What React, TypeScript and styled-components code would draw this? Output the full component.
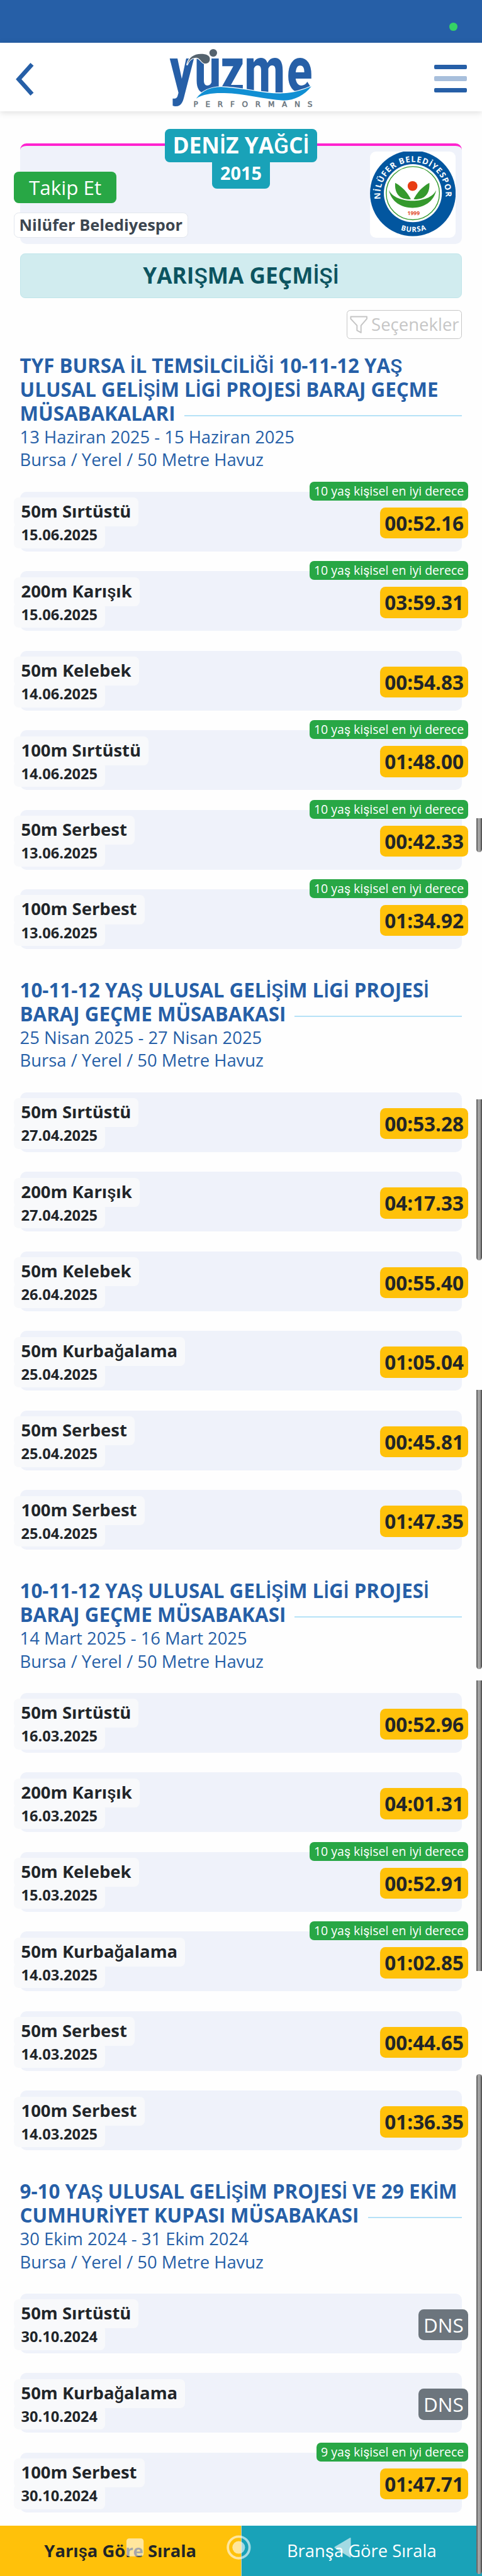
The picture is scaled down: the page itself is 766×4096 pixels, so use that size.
import React from 'react';
import styled, { createGlobalStyle, css } from 'styled-components';

const SCALE = 0.70895;
const u = (n: number) => `${Math.round(n * SCALE * 100) / 100}px`;

const color = {
  brand: '#265fa7',
  teal: '#19a2b8',
  green: '#28a745',
  amber: '#ffc10a',
  grey: '#6c757d',
  panel: '#eff2fa',
  chip: '#f8f9fb',
  ink: '#212529',
};

const GlobalStyle = createGlobalStyle`
  *, *::before, *::after { box-sizing: border-box; }
  html, body { margin: 0; padding: 0; background: #fefefe; overflow: hidden; }
  body { font-family: "Open Sans", "Noto Sans", sans-serif; color: ${color.ink}; }
`;

const Page = styled.div`
  position: relative;
  width: 100%;
  height: 4096px;
  overflow: hidden;
  display: flex;
  flex-direction: column;
`;

/* Letters of the extended Latin block come from the fallback face. */
const FallbackGlyph = styled.span<{ $bold?: boolean }>`
  font-family: Roboto, sans-serif;
  font-weight: ${(p) => (p.$bold ? 500 : 400)};
  line-height: 0;
`;

function T({ children, bold }: { children: string; bold?: boolean }) {
  return (
    <>
      {children.split(/([İŞşĞğ]+)/).map((part, i) =>
        i % 2 ? (
          <FallbackGlyph key={i} $bold={bold}>
            {part}
          </FallbackGlyph>
        ) : (
          part
        ),
      )}
    </>
  );
}

/* ---------- top ---------- */

const StatusBar = styled.div`
  flex: none;
  height: ${u(95.5)};
  background: ${color.brand};
  display: flex;
  justify-content: flex-end;
  align-items: flex-start;
  padding: ${u(51)} ${u(55)} 0 0;
`;

const StatusDot = styled.span`
  width: ${u(18)};
  height: ${u(18)};
  border-radius: 50%;
  background: #35d366;
`;

const Header = styled.header`
  flex: none;
  height: ${u(154.5)};
  background: #fff;
  box-shadow: 0 2px 10px rgba(0, 0, 0, 0.13);
  display: flex;
  align-items: flex-start;
  justify-content: space-between;
  padding: 0 ${u(34)} 0 ${u(34)};
`;

const BackIcon = styled.svg`
  width: ${u(44)};
  height: ${u(76)};
  margin-top: ${u(43.5)};
`;

const Brand = styled.svg`
  overflow: visible;
  width: ${u(360)};
  height: ${u(170)};
  margin: ${u(-5.5)} 0 0 ${u(29)};
`;

const Burger = styled.div`
  width: ${u(73)};
  margin-top: ${u(49.5)};
  display: flex;
  flex-direction: column;
  gap: ${u(15.5)};
`;

const BurgerBar = styled.span<{ $faded?: boolean }>`
  height: ${u(10.7)};
  border-radius: 2px;
  background: ${(p) => (p.$faded ? '#a8bfdc' : color.brand)};
`;

const letterScaleX = 0.736;
const letterX = [62, 229, 402, 564, 850].map((x) => x / letterScaleX).join(' ');

function BrandLogo() {
  return (
    <Brand viewBox="0 0 1080 510">
      <text
        transform={`scale(${letterScaleX} 1)`}
        x={letterX}
        y="350"
        fontFamily="Roboto, sans-serif"
        fontWeight="800"
        fontSize="432"
        fill={color.brand}
      >
        yuzme
      </text>
      <path
        d="M240 392C290 330 350 312 420 315C560 322 700 362 830 357C900 352 960 335 1015 310C970 370 900 405 830 405C700 400 560 358 430 356C350 354 290 362 240 392Z"
        fill="#118fd3"
        stroke="#fff"
        strokeWidth="10"
        paintOrder="stroke"
      />
      <path
        d="M178 168C190 110 230 88 285 92C320 95 335 110 332 130C330 152 312 160 292 155C270 145 265 116 235 118C210 118 190 135 178 168Z"
        fill="#55636e"
        stroke="#fff"
        strokeWidth="10"
        paintOrder="stroke"
      />
      <circle cx="355" cy="85" r="26" fill="#55636e" />
      <text
        x="222"
        y="449"
        fontFamily="'DejaVu Sans', sans-serif"
        fontSize="51"
        fontWeight="400"
        stroke="#66717a"
        strokeWidth="2"
        fill="#66717a"
        textLength="800"
        lengthAdjust="spacing"
      >
        PERFORMANS
      </text>
    </Brand>
  );
}

/* ---------- profile ---------- */

const Content = styled.main`
  flex: 1;
  padding: ${u(72)} ${u(44.6)} 0;
  display: flex;
  flex-direction: column;
`;

const ProfileCard = styled.section`
  position: relative;
  flex: none;
  height: ${u(225)};
  border-top: 4px solid #ff22cf;
  border-radius: ${u(14)};
  background: ${color.panel};
  display: flex;
  justify-content: space-between;
  padding: ${u(12.4)} ${u(14)} 0 0;
`;

const NameStack = styled.div`
  position: absolute;
  top: ${u(-38.6)};
  left: 0;
  right: 0;
  display: flex;
  flex-direction: column;
  align-items: center;
  color: #fff;
  font-weight: 700;
`;

const NameBadge = styled.div`
  width: ${u(341)};
  height: ${u(75)};
  border-radius: ${u(11)};
  background: ${color.teal};
  font-size: ${u(49.8)};
  line-height: ${u(72.7)};
  text-align: center;
  white-space: nowrap;
`;

const YearBadge = styled.div`
  width: ${u(130)};
  height: ${u(59)};
  border-radius: 0 0 ${u(11)} ${u(11)};
  background: ${color.teal};
  font-size: ${u(40.6)};
  line-height: ${u(47.5)};
  text-align: center;
`;

const ProfileLeft = styled.div`
  margin-left: ${u(-14)};
  padding-top: ${u(45)};
  display: flex;
  flex-direction: column;
  align-items: flex-start;
  gap: ${u(21.5)};
`;

const FollowButton = styled.button`
  width: ${u(231)};
  height: ${u(70)};
  border: 0;
  padding: 0;
  border-radius: ${u(11)};
  background: ${color.green};
  color: #fff;
  font: 400 ${u(44.3)} / ${u(69.5)} 'Open Sans', sans-serif;
`;

const ClubChip = styled.div`
  height: ${u(56.5)};
  width: ${u(391)};
  border: 1.5px solid #e3e7ee;
  border-radius: ${u(11)};
  background: #fff;
  color: #3c4650;
  font-weight: 700;
  font-size: ${u(35.8)};
  line-height: ${u(51)};
  text-align: center;
  white-space: nowrap;
`;

const ClubLogo = styled.svg`
  flex: none;
  width: ${u(192.5)};
  height: ${u(193)};
  border-radius: ${u(13)};
  background: #fff;
`;

function ClubEmblem() {
  const lettering = {
    fontFamily: '"Open Sans", sans-serif',
    fontWeight: 700,
    fill: '#fff',
  };
  return (
    <ClubLogo viewBox="92 90 577 579">
      <defs>
        <path id="arcTop" d="M163 410A220 220 0 1 1 599 410" />
        <path id="arcBottom" d="M133 450A259 259 0 0 0 627 450" />
      </defs>
      <circle cx="380" cy="371" r="288" fill="#02569f" />
      <circle cx="380" cy="370" r="195" fill="#fff" />
      <circle cx="380" cy="370" r="179" fill="none" stroke="#35992d" strokeWidth="6" />
      <circle cx="378" cy="322" r="33" fill="#e83d14" />
      <path d="M261 300C313 328 343 366 367 411C295 414 256 378 261 300Z" fill="#35992d" />
      <path d="M491 300C439 328 409 366 385 411C457 414 496 378 491 300Z" fill="#35992d" />
      <path d="M219 349C262 445 495 445 537 349C508 508 248 508 219 349Z" fill="#35992d" />
      <text
        x="385"
        y="516"
        textAnchor="middle"
        fontFamily="'Open Sans', sans-serif"
        fontWeight="700"
        fontSize="36"
        fill="#e0492a"
      >
        1999
      </text>
      <text {...lettering} fontSize="55">
        <textPath href="#arcTop" textLength="735" lengthAdjust="spacing">
          NİLÜFER BELEDİYESPOR
        </textPath>
      </text>
      <text {...lettering} fontSize="48" textAnchor="middle" letterSpacing="4">
        <textPath href="#arcBottom" startOffset="51%">
          BURSA
        </textPath>
      </text>
    </ClubLogo>
  );
}

const PageTitle = styled.h1`
  flex: none;
  margin: ${u(22)} 0 0;
  height: ${u(100)};
  border: 1.5px solid #bfe5ea;
  border-radius: ${u(11)};
  background: #d1ecef;
  color: #0c5460;
  font-size: ${u(49.7)};
  line-height: ${u(95)};
  font-weight: 700;
  text-align: center;
`;

const OptionsButton = styled.button`
  flex: none;
  align-self: flex-end;
  margin-top: ${u(26)};
  width: ${u(259)};
  height: ${u(66)};
  padding: 0 0 0 ${u(6)};
  border: 1.5px solid #c6c6c6;
  border-radius: ${u(8)};
  background: #fff;
  color: #c6c6c6;
  display: flex;
  align-items: center;
  gap: ${u(8)};
  font: 400 ${u(38.8)} / ${u(62)} 'Open Sans', sans-serif;
  white-space: nowrap;
`;

const FilterIcon = styled.svg`
  flex: none;
  width: ${u(40)};
  height: ${u(40)};
`;

/* ---------- meets ---------- */

const Meet = styled.section`
  flex: none;
  & + & {
    margin-top: ${u(64.6)};
  }
`;

const MeetHead = styled.div`
  color: ${color.brand};
  margin-bottom: ${u(46)};
`;

const MeetTitle = styled.h2`
  margin: 0;
  font-size: ${u(44.1)};
  line-height: ${u(54.6)};
  font-weight: 700;
`;

const TitleLine = styled.span`
  display: flex;
  height: ${u(53.3)};
  white-space: pre;
`;

const TitleRule = styled.i`
  flex: 1;
  height: 2px;
  margin: ${u(30.8)} 0 0 ${u(20)};
  background: #b6e2f7;
`;

const MeetInfo = styled.p`
  margin: 0;
  height: ${u(52)};
  font-size: ${u(38.65)};
  line-height: ${u(53.4)};
`;

const Races = styled.ul`
  list-style: none;
  margin: 0;
  padding: 0;
  display: flex;
  flex-direction: column;
  gap: ${u(44.4)};
`;

const Race = styled.li`
  position: relative;
  height: ${u(134)};
  border-radius: ${u(14)};
  background: ${color.panel};
  display: flex;
  justify-content: space-between;
  align-items: flex-start;
`;

const RaceLeft = styled.div`
  margin: ${u(13)} 0 0 ${u(-14)};
  display: flex;
  flex-direction: column;
  align-items: flex-start;
  font-weight: 700;
  white-space: nowrap;
`;

const chip = css`
  background: ${color.chip};
  border-radius: ${u(11)};
  padding: 0 ${u(17)} 0 ${u(16.6)};
`;

const Stroke = styled.span`
  ${chip}
  height: ${u(65)};
  font-size: ${u(38.7)};
  line-height: ${u(61.6)};
`;

const RaceDate = styled.span`
  ${chip}
  margin-top: ${u(-8)};
  padding-top: ${u(8)};
  height: ${u(56.6)};
  font-size: ${u(33.3)};
  line-height: ${u(38.4)};
`;

const Result = styled.span<{ $absent: boolean }>`
  margin: ${u(35)} ${u(-14)} 0 0;
  height: ${u(69.7)};
  width: ${(p) => u(p.$absent ? 111.5 : 198)};
  border-radius: ${u(12)};
  text-align: center;
  font-size: ${u(44.4)};
  line-height: ${u(69.7)};
  font-weight: ${(p) => (p.$absent ? 400 : 700)};
  color: ${(p) => (p.$absent ? '#fff' : color.ink)};
  background: ${(p) => (p.$absent ? color.grey : color.amber)};
`;

const BestBadge = styled.span`
  position: absolute;
  top: ${u(-23)};
  right: ${u(-14)};
  height: ${u(42.5)};
  padding: 0 ${u(10)};
  border-radius: ${u(10)};
  background: ${color.green};
  color: #fff;
  font-size: ${u(27.5)};
  line-height: ${u(41)};
  white-space: nowrap;
`;

type RaceData = { stroke: string; date: string; result: string; best?: string };
type MeetData = { title: string[]; dates: string; races: RaceData[] };

const TEN = '10 yaş kişisel en iyi derece';
const NINE = '9 yaş kişisel en iyi derece';

const meets: MeetData[] = [
  {
    title: ['TYF BURSA İL TEMSİLCİLİĞİ 10-11-12 YAŞ ', 'ULUSAL GELİŞİM LİGİ PROJESİ BARAJ GEÇME ', 'MÜSABAKALARI'],
    dates: '13 Haziran 2025 - 15 Haziran 2025',
    races: [
      { stroke: '50m Sırtüstü', date: '15.06.2025', result: '00:52.16', best: TEN },
      { stroke: '200m Karışık', date: '15.06.2025', result: '03:59.31', best: TEN },
      { stroke: '50m Kelebek', date: '14.06.2025', result: '00:54.83' },
      { stroke: '100m Sırtüstü', date: '14.06.2025', result: '01:48.00', best: TEN },
      { stroke: '50m Serbest', date: '13.06.2025', result: '00:42.33', best: TEN },
      { stroke: '100m Serbest', date: '13.06.2025', result: '01:34.92', best: TEN },
    ],
  },
  {
    title: ['10-11-12 YAŞ ULUSAL GELİŞİM LİGİ PROJESİ ', 'BARAJ GEÇME MÜSABAKASI'],
    dates: '25 Nisan 2025 - 27 Nisan 2025',
    races: [
      { stroke: '50m Sırtüstü', date: '27.04.2025', result: '00:53.28' },
      { stroke: '200m Karışık', date: '27.04.2025', result: '04:17.33' },
      { stroke: '50m Kelebek', date: '26.04.2025', result: '00:55.40' },
      { stroke: '50m Kurbağalama', date: '25.04.2025', result: '01:05.04' },
      { stroke: '50m Serbest', date: '25.04.2025', result: '00:45.81' },
      { stroke: '100m Serbest', date: '25.04.2025', result: '01:47.35' },
    ],
  },
  {
    title: ['10-11-12 YAŞ ULUSAL GELİŞİM LİGİ PROJESİ ', 'BARAJ GEÇME MÜSABAKASI'],
    dates: '14 Mart 2025 - 16 Mart 2025',
    races: [
      { stroke: '50m Sırtüstü', date: '16.03.2025', result: '00:52.96' },
      { stroke: '200m Karışık', date: '16.03.2025', result: '04:01.31' },
      { stroke: '50m Kelebek', date: '15.03.2025', result: '00:52.91', best: TEN },
      { stroke: '50m Kurbağalama', date: '14.03.2025', result: '01:02.85', best: TEN },
      { stroke: '50m Serbest', date: '14.03.2025', result: '00:44.65' },
      { stroke: '100m Serbest', date: '14.03.2025', result: '01:36.35' },
    ],
  },
  {
    title: ['9-10 YAŞ ULUSAL GELİŞİM PROJESİ VE 29 EKİM ', 'CUMHURİYET KUPASI MÜSABAKASI'],
    dates: '30 Ekim 2024 - 31 Ekim 2024',
    races: [
      { stroke: '50m Sırtüstü', date: '30.10.2024', result: 'DNS' },
      { stroke: '50m Kurbağalama', date: '30.10.2024', result: 'DNS' },
      { stroke: '100m Serbest', date: '30.10.2024', result: '01:47.71', best: NINE },
    ],
  },
];

const MeetList = styled.div`
  padding-top: ${u(32.2)};
`;

/* ---------- bottom and overlays ---------- */

const SortBar = styled.nav`
  position: relative;
  flex: none;
  height: ${u(112.6)};
  display: flex;
  z-index: 1;
`;

const SortButton = styled.button<{ $active?: boolean }>`
  flex: 1;
  border: 0;
  padding: 0;
  font: ${(p) => (p.$active ? 700 : 400)} ${u(38.6)} / ${u(109.5)} 'Open Sans', sans-serif;
  background: ${(p) => (p.$active ? color.amber : color.teal)};
  color: ${(p) => (p.$active ? color.ink : '#fff')};
  & + & {
    border-left: 1px solid #c9d3b4;
  }
`;

const SystemKeys = styled.svg`
  position: absolute;
  left: ${u(270)};
  top: ${u(12)};
  width: ${u(540)};
  height: ${u(80)};
`;

const ScrollThumb = styled.div<{ $top: number; $bottom: number; $cap: string }>`
  position: absolute;
  z-index: 2;
  right: 0;
  width: ${u(13)};
  top: ${(p) => u(p.$top)};
  height: ${(p) => u(p.$bottom - p.$top)};
  border-radius: ${(p) => p.$cap};
  background: linear-gradient(90deg, #777 0%, #5a5a5a 14%, #a8a8a8 30%, #a0a0a0 60%, #707070 84%, #2e2e2e 100%);
`;

const thumbs = [
  { top: 1835, bottom: 1911, cap: '0 0 5px 5px' },
  { top: 2465, bottom: 2827, cap: '0 0 5px 5px' },
  { top: 3117, bottom: 3744, cap: '0 0 5px 5px' },
  { top: 3769, bottom: 4421, cap: '0' },
  { top: 4651.5, bottom: 5773, cap: '5px' },
];

export default function App() {
  return (
    <Page>
      <GlobalStyle />
      <StatusBar>
        <StatusDot />
      </StatusBar>
      <Header>
        <BackIcon viewBox="0 0 44 76">
          <path d="M38 4.5L8 38L38 71.5" fill="none" stroke={color.brand} strokeWidth="9.5" />
        </BackIcon>
        <BrandLogo />
        <Burger>
          <BurgerBar />
          <BurgerBar $faded />
          <BurgerBar />
        </Burger>
      </Header>

      <Content>
        <ProfileCard>
          <ProfileLeft>
            <FollowButton>Takip Et</FollowButton>
            <ClubChip>Nilüfer Belediyespor</ClubChip>
          </ProfileLeft>
          <ClubEmblem />
          <NameStack>
            <NameBadge>
              <T bold>DENİZ YAĞCİ</T>
            </NameBadge>
            <YearBadge>2015</YearBadge>
          </NameStack>
        </ProfileCard>

        <PageTitle>
          <T bold>YARIŞMA GEÇMİŞİ</T>
        </PageTitle>

        <OptionsButton>
          <FilterIcon viewBox="0 0 40 40">
            <path
              d="M2 2H38V7L25 22V38L16 33V22L2 7Z"
              fill="none"
              stroke="#c6c6c6"
              strokeWidth="2.8"
              strokeLinejoin="round"
            />
          </FilterIcon>
          Seçenekler
        </OptionsButton>

        <MeetList>
          {meets.map((meet) => (
            <Meet key={meet.dates}>
              <MeetHead>
                <MeetTitle>
                  {meet.title.map((line, i) => (
                    <TitleLine key={line}>
                      <span>
                        <T bold>{line}</T>
                      </span>
                      {i === meet.title.length - 1 && <TitleRule />}
                    </TitleLine>
                  ))}
                </MeetTitle>
                <MeetInfo>{meet.dates}</MeetInfo>
                <MeetInfo>Bursa / Yerel / 50 Metre Havuz</MeetInfo>
              </MeetHead>
              <Races>
                {meet.races.map((race) => (
                  <Race key={race.stroke}>
                    <RaceLeft>
                      <Stroke>
                        <T bold>{race.stroke}</T>
                      </Stroke>
                      <RaceDate>{race.date}</RaceDate>
                    </RaceLeft>
                    <Result $absent={race.result === 'DNS'}>{race.result}</Result>
                    {race.best && (
                      <BestBadge>
                        <T>{race.best}</T>
                      </BestBadge>
                    )}
                  </Race>
                ))}
              </Races>
            </Meet>
          ))}
        </MeetList>
      </Content>

      <SortBar>
        <SortButton $active>
          <T bold>Yarışa Göre Sırala</T>
        </SortButton>
        <SortButton>
          <T>Branşa Göre Sırala</T>
        </SortButton>
        <SystemKeys viewBox="0 0 540 80">
          <g fill="#fff" fillOpacity="0.6">
            <rect x="14" y="16" width="38.5" height="40" rx="6" />
            <circle cx="265.7" cy="36" r="14.2" />
            <path d="M481 34.5L515 14.5Q517 13.5 517 16V57Q517 59.5 515 58.5L481 37.5Q479.5 36 481 34.5Z" />
          </g>
          <circle
            cx="265.7"
            cy="36"
            r="24.3"
            fill="none"
            stroke="#fff"
            strokeOpacity="0.6"
            strokeWidth="5.4"
          />
        </SystemKeys>
      </SortBar>

      {thumbs.map((t) => (
        <ScrollThumb key={t.top} $top={t.top} $bottom={t.bottom} $cap={t.cap} />
      ))}
    </Page>
  );
}
